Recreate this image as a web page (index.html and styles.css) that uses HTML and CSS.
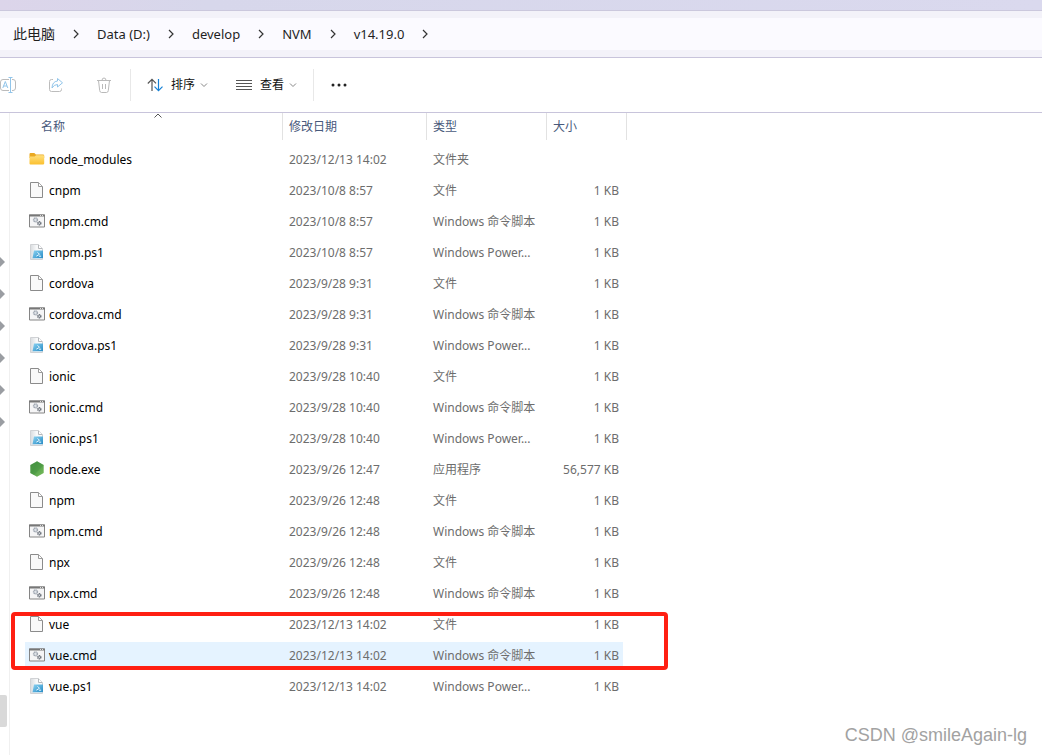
FILE: index.html
```html
<!DOCTYPE html>
<html lang="zh-CN">
<head>
<meta charset="utf-8">
<title>v14.19.0</title>
<link rel="stylesheet" href="styles.css">
</head>
<body>
<svg class="defs" aria-hidden="true">
  <defs>
    <linearGradient id="gFolder" x1="0" y1="0" x2="0" y2="1"><stop offset="0" stop-color="#ffdf7d"/><stop offset="1" stop-color="#fbc02f"/></linearGradient>
    <linearGradient id="gNode" x1="0" y1="0" x2="1" y2="1"><stop offset="0" stop-color="#3d8b3d"/><stop offset=".5" stop-color="#55a14a"/><stop offset="1" stop-color="#7bc05f"/></linearGradient>
    <linearGradient id="gPs" x1="0" y1="0" x2="1" y2="1"><stop offset="0" stop-color="#8ed4f2"/><stop offset="1" stop-color="#2389c4"/></linearGradient>
    <linearGradient id="gSheet" x1="0" y1="0" x2="1" y2="0"><stop offset="0" stop-color="#d9dcdf"/><stop offset=".5" stop-color="#f8f9fa"/></linearGradient>
    <symbol id="folder" viewBox="0 0 16 16"><path d="M.5 3.200Q.5 2 1.500 2h3.800l1.600 1.600H14q1.200 0 1.200 1V7H.5z" fill="#eaa922"/><path d="M.5 5.400h5.200l1.400-1.100H14q1.200 0 1.200 1v7.200q0 1-1.200 1H1.500q-1 0-1-1z" fill="url(#gFolder)"/></symbol>
    <symbol id="file" viewBox="0 0 16 16"><path d="M1.500.5h8l4 4v11h-12z" fill="#f9f9f9" stroke="#8b8b8b"/><path d="M9.500.8v3.700h3.700" fill="#fff" stroke="#9b9b9b"/></symbol>
    <symbol id="cmd" viewBox="0 0 16 16"><path d="M.5 2h15v12H.5z" fill="#f5f5f6" stroke="#858585"/><path d="M0 2.500h16" stroke="#777" stroke-width="2"/><path d="M11 2.500h1m1 0h1" stroke="#ddd"/><circle cx="6.500" cy="6.800" r="1.900" fill="#dfe3e8" stroke="#a1a8b2" stroke-width="1.500" stroke-dasharray="1.200 .4"/><circle cx="10.300" cy="10.300" r="1.500" fill="#d5d9de" stroke="#6e747d" stroke-width="1.500" stroke-dasharray="1.100 .4"/></symbol>
    <symbol id="ps" viewBox="0 0 16 16"><path d="M1.500.5h8l4 4v11h-12z" fill="url(#gSheet)" stroke="#d0d2d5"/><path d="M9.500.8v3.700h3.700" fill="#fff" stroke="#b5b8bb"/><path d="M5 6.500h9v7q0 .8-1 .8H3.500z" fill="url(#gPs)"/><path d="M8.500 8.300l2 2-3.200 1.900M10 12.200h2.200" fill="none" stroke="#e8f7ff"/></symbol>
    <symbol id="node" viewBox="0 0 16 16"><path d="M8 .3l6.700 3.800v7.800L8 15.700 1.300 11.900V4.100z" fill="url(#gNode)"/><path d="M8 .3l6.700 3.800L5 14 1.300 11.900z" fill="#3f8f40" opacity=".35"/></symbol>
    <symbol id="next" viewBox="0 0 8 10"><path d="M2 1l4 4-4 4" fill="none" stroke="#333" stroke-width="1.200"/></symbol>
    <symbol id="down" viewBox="0 0 8 6"><path d="M1 1.500l3 3 3-3" fill="none" stroke="#888"/></symbol>
  </defs>
</svg>
<div class="titlebar"></div>
<nav class="address" aria-label="路径">
  <div class="crumbs">
    <a href="#">此电脑</a><svg><use href="#next"/></svg>
    <a href="#">Data (D:)</a><svg><use href="#next"/></svg>
    <a href="#">develop</a><svg><use href="#next"/></svg>
    <a href="#">NVM</a><svg><use href="#next"/></svg>
    <a href="#">v14.19.0</a><svg><use href="#next"/></svg>
  </div>
</nav>
<div class="toolbar">
  <button class="tool" aria-label="重命名" disabled><svg viewBox="0 0 16 16" fill="none"><path d="M9 2.500H3q-2.500 0-2.500 2.500v6q0 2.500 2.500 2.500h6M12 2.500h1q2.500 0 2.500 2.500v6q0 2.500-2.500 2.500h-1" stroke="#bcbcbc"/><path d="M2.800 11l2.500-6.500L7.800 11M3.600 9h3.400M10.500.5v15M8.500.5h4M8.500 15.500h4" stroke="#91c5ea"/></svg></button>
  <button class="tool" aria-label="共享" disabled><svg viewBox="0 0 16 16" fill="none"><path d="M5 2.500H3.500q-2 0-2 2v8q0 2 2 2h8q2 0 2-2V11.500" stroke="#bcbcbc"/><path d="M9.500 1.500l5 4.300-5 4.200V7.500Q6 7.500 4 11q.3-6.500 5.500-7z" stroke="#91c5ea"/></svg></button>
  <button class="tool" aria-label="删除" disabled><svg viewBox="0 0 16 16" fill="none" stroke="#b9b9b9"><path d="M1 3.500h14M6 3.500q0-2.500 2-2.500t2 2.500M2.500 3.500l1.200 10q.2 2 1.800 2h5q1.600 0 1.800-2l1.200-10M6.500 7v5M9.500 7v5"/></svg></button>
  <button class="menu sort"><svg class="glyph" viewBox="0 0 16 16" fill="none"><path d="M5 14V2.500M.8 6.500L5 2.300l4 4" stroke="#555" stroke-width="1.200"/><path d="M11.500 2v11.500M7.500 9.700l4 4 4-4" stroke="#1681d5" stroke-width="1.200"/></svg>排序<svg class="arrow"><use href="#down"/></svg></button>
  <button class="menu view"><svg class="glyph" viewBox="0 0 16 16" stroke="#555"><path d="M0 3.500h16M0 6.500h16M0 9.500h16M0 12.500h16"/></svg>查看<svg class="arrow"><use href="#down"/></svg></button>
  <button class="more" aria-label="更多"><svg viewBox="0 0 16 4" fill="#222"><circle cx="2" cy="2" r="1.500"/><circle cx="8" cy="2" r="1.500"/><circle cx="14" cy="2" r="1.500"/></svg></button>
</div>
<div class="body">
  <aside class="side">
    <div class="pins"><i></i><i></i><i></i><i></i><i></i><i></i></div>
    <div class="thumb"></div>
  </aside>
  <main class="files">
    <div class="list">
      <table>
        <colgroup><col class="c-name"><col class="c-date"><col class="c-type"><col class="c-size"></colgroup>
        <thead><tr><th>名称<svg class="asc" viewBox="0 0 8 5"><path d="M.5 4.500L4 1l3.500 3.500" fill="none" stroke="#555"/></svg></th><th>修改日期</th><th>类型</th><th>大小</th></tr></thead>
        <tbody>
          <tr><td><svg><use href="#folder"/></svg>node_modules</td><td>2023/12/13 14:02</td><td>文件夹</td><td></td></tr>
          <tr><td><svg><use href="#file"/></svg>cnpm</td><td>2023/10/8 8:57</td><td>文件</td><td>1 KB</td></tr>
          <tr><td><svg><use href="#cmd"/></svg>cnpm.cmd</td><td>2023/10/8 8:57</td><td>Windows 命令脚本</td><td>1 KB</td></tr>
          <tr><td><svg><use href="#ps"/></svg>cnpm.ps1</td><td>2023/10/8 8:57</td><td>Windows Power...</td><td>1 KB</td></tr>
          <tr><td><svg><use href="#file"/></svg>cordova</td><td>2023/9/28 9:31</td><td>文件</td><td>1 KB</td></tr>
          <tr><td><svg><use href="#cmd"/></svg>cordova.cmd</td><td>2023/9/28 9:31</td><td>Windows 命令脚本</td><td>1 KB</td></tr>
          <tr><td><svg><use href="#ps"/></svg>cordova.ps1</td><td>2023/9/28 9:31</td><td>Windows Power...</td><td>1 KB</td></tr>
          <tr><td><svg><use href="#file"/></svg>ionic</td><td>2023/9/28 10:40</td><td>文件</td><td>1 KB</td></tr>
          <tr><td><svg><use href="#cmd"/></svg>ionic.cmd</td><td>2023/9/28 10:40</td><td>Windows 命令脚本</td><td>1 KB</td></tr>
          <tr><td><svg><use href="#ps"/></svg>ionic.ps1</td><td>2023/9/28 10:40</td><td>Windows Power...</td><td>1 KB</td></tr>
          <tr><td><svg><use href="#node"/></svg>node.exe</td><td>2023/9/26 12:47</td><td>应用程序</td><td>56,577 KB</td></tr>
          <tr><td><svg><use href="#file"/></svg>npm</td><td>2023/9/26 12:48</td><td>文件</td><td>1 KB</td></tr>
          <tr><td><svg><use href="#cmd"/></svg>npm.cmd</td><td>2023/9/26 12:48</td><td>Windows 命令脚本</td><td>1 KB</td></tr>
          <tr><td><svg><use href="#file"/></svg>npx</td><td>2023/9/26 12:48</td><td>文件</td><td>1 KB</td></tr>
          <tr><td><svg><use href="#cmd"/></svg>npx.cmd</td><td>2023/9/26 12:48</td><td>Windows 命令脚本</td><td>1 KB</td></tr>
          <tr><td><svg><use href="#file"/></svg>vue</td><td>2023/12/13 14:02</td><td>文件</td><td>1 KB</td></tr>
          <tr class="selected"><td><svg><use href="#cmd"/></svg>vue.cmd</td><td>2023/12/13 14:02</td><td>Windows 命令脚本</td><td>1 KB</td></tr>
          <tr><td><svg><use href="#ps"/></svg>vue.ps1</td><td>2023/12/13 14:02</td><td>Windows Power...</td><td>1 KB</td></tr>
        </tbody>
      </table>
      <div class="mark"></div>
    </div>
  </main>
  <div class="credit">CSDN @smileAgain-lg</div>
</div>
</body>
</html>
```
FILE: styles.css
```css
* { box-sizing: border-box; }
body {
  margin: 0;
  min-height: 100vh;
  display: flex;
  flex-direction: column;
  background: #fff;
  color: #1a1a1a;
  font: 13px/20px "Noto Sans", "Noto Sans CJK SC", sans-serif;
}
.defs { position: absolute; width: 0; height: 0; }
.titlebar {
  height: 11px;
  background: linear-gradient(90deg, #dcd5ea, #d7d7eb 20%, #dad9ee);
  border-bottom: 1px solid #cbc8dd;
}
.address {
  padding: 7px 0;
  background: #f3f2f9;
  border-bottom: 1px solid #c8c4db;
}
.crumbs {
  display: flex;
  align-items: center;
  gap: 17px;
  height: 32px;
  padding-left: 13px;
  background: #fbfaff;
}
.crumbs a { color: #1f1f1f; text-decoration: none; font-size: 13px; }
.crumbs a:first-child { font-size: 14px; }
.crumbs svg { width: 8px; height: 10px; }
.toolbar {
  display: flex;
  align-items: center;
  height: 55px;
  border-bottom: 1px solid #c8c4db;
}
button {
  border: 0;
  padding: 0;
  background: none;
  display: flex;
  align-items: center;
  font: inherit;
  color: #111;
}
.tool { margin-right: 32px; }
.tool svg, .glyph { width: 16px; height: 16px; }
.tool:nth-child(3) { margin-right: 18px; }
.menu { height: 32px; font-size: 12px; }
.sort { border-left: 1px solid #e8e8e8; padding: 0 28px 0 16px; }
.view { border-right: 1px solid #e8e8e8; padding-right: 16px; }
.glyph { margin-right: 8px; }
.arrow { width: 8px; height: 6px; margin-left: 5px; }
.more { margin-left: 16px; }
.more svg { width: 18px; height: 4px; }
.body { flex: 1; display: flex; position: relative; }
.side {
  width: 10px;
  flex: none;
  border-right: 1px solid #f0f0f0;
  display: flex;
  flex-direction: column;
  justify-content: space-between;
  padding: 144px 0 28px;
}
.pins { display: flex; flex-direction: column; gap: 22px; }
.pins i {
  width: 5px;
  height: 10px;
  background: #9a9da2;
  clip-path: polygon(0 0, 100% 50%, 0 100%);
}
.thumb { width: 7px; height: 32px; background: #d9d9d9; border-radius: 0 2px 2px 0; }
.files { flex: 1; padding-left: 15px; }
.list { position: relative; width: max-content; }
table { table-layout: fixed; width: 602px; border-collapse: separate; border-spacing: 0; }
.c-name { width: 258px; }
.c-date { width: 144px; }
.c-type { width: 120px; }
.c-size { width: 80px; }
th {
  position: relative;
  height: 27px;
  padding: 0 0 0 6px;
  border-right: 1px solid #e2e2e2;
  text-align: left;
  font-size: 12px;
  font-weight: 400;
  color: #48597b;
}
th:first-child { padding-left: 16px; }
.asc { position: absolute; top: 0; left: 50%; width: 8px; height: 5px; }
tbody::before { content: ""; display: block; height: 4px; }
td {
  height: 31px;
  padding: 0 0 0 6px;
  border: solid transparent;
  border-width: 2px 0;
  background-clip: padding-box;
  font-size: 12px;
  color: #6d6d6d;
  white-space: nowrap;
}
td:first-child { padding-left: 4px; color: #000; }
td:last-child { text-align: right; padding: 0 4px 0 0; border-right-width: 4px; }
td svg { width: 16px; height: 16px; margin-right: 4px; vertical-align: -3px; }
.selected td { background-color: #e5f3ff; }
.mark {
  position: absolute;
  left: -14px;
  right: -41px;
  bottom: 32px;
  height: 58px;
  border: 4px solid #ff1f12;
  border-radius: 4px;
}
.credit {
  position: absolute;
  right: 15px;
  bottom: 8px;
  font: 18px/24px "Liberation Sans", Arial, sans-serif;
  color: #a2a2a2;
}
```
